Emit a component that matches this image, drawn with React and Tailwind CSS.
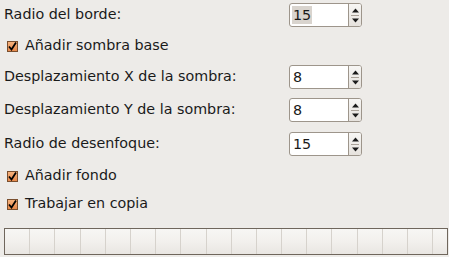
import React from "react";

function Spin({ value, selected }) {
  return (
    <div className="flex h-[24px] w-[73px] rounded-[3px] border border-[#9d958b] bg-white overflow-hidden">
      <div className="flex flex-1 items-center pl-[2px]">
        <span className={selected ? "bg-[#d9d4ce] px-[1px] leading-[18px]" : "px-[1px] leading-[18px]"}>{value}</span>
      </div>
      <div className="flex w-[13px] flex-col border-l border-[#9d958b] bg-gradient-to-b from-[#f7f6f4] to-[#e6e2dd]">
        <div className="flex flex-1 items-end justify-center pb-[2px]">
          <svg width="7" height="5" viewBox="0 0 7 5"><path d="M3.5 0.5 L7 4.5 L0 4.5 Z" fill="#1a1a1a" /></svg>
        </div>
        <div className="mx-[2px] h-px bg-[#a9a198]" />
        <div className="flex flex-1 items-start justify-center pt-[2px]">
          <svg width="7" height="5" viewBox="0 0 7 5"><path d="M0 0.5 L7 0.5 L3.5 4.5 Z" fill="#1a1a1a" /></svg>
        </div>
      </div>
    </div>
  );
}

function Check({ label, className }) {
  return (
    <div className={"flex h-[18px] items-center " + className}>
      <div className="ml-[7px] flex h-[11px] w-[11px] items-center justify-center border border-[#7a4f2e] bg-gradient-to-b from-[#f6b27c] to-[#e8894a]">
        <svg width="9" height="9" viewBox="0 0 9 9">
          <path d="M1 4.5 L3.5 7.5 L8 0.5" stroke="#000" strokeWidth="1.8" fill="none" />
        </svg>
      </div>
      <span className="ml-[7px]">{label}</span>
    </div>
  );
}

function Row({ label, value, selected, className }) {
  return (
    <div className={"flex h-[24px] items-center " + className}>
      <span className="ml-[4px] w-[285px]">{label}</span>
      <Spin value={value} selected={selected} />
    </div>
  );
}

export default function App() {
  const segs = Array.from({ length: 18 });
  return (
    <div className="h-[257px] w-[449px] overflow-hidden bg-[#edebe8] text-[14.3px] text-[#1a1a1a]" style={{ fontFamily: '"DejaVu Sans", sans-serif' }}>
      <div className="flex flex-col">
        <Row label="Radio del borde:" value="15" selected className="mt-[3px]" />
        <Check label="Añadir sombra base" className="mt-[10px]" />
        <Row label="Desplazamiento X de la sombra:" value="8" className="mt-[10px]" />
        <Row label="Desplazamiento Y de la sombra:" value="8" className="mt-[9px]" />
        <Row label="Radio de desenfoque:" value="15" className="mt-[10px]" />
        <Check label="Añadir fondo" className="mt-[11px]" />
        <Check label="Trabajar en copia" className="mt-[10px]" />
        <div className="ml-[4px] mt-[15px] flex h-[27px] w-[444px] overflow-hidden border border-[#6f665c] bg-gradient-to-b from-[#f7f6f4] via-[#f2f0ed] to-[#e9e6e2]">
          {segs.map((_, i) => (
            <div key={i} className="h-full w-[25.2px] shrink-0 border-r border-[#d6d2cc]" />
          ))}
        </div>
      </div>
    </div>
  );
}
